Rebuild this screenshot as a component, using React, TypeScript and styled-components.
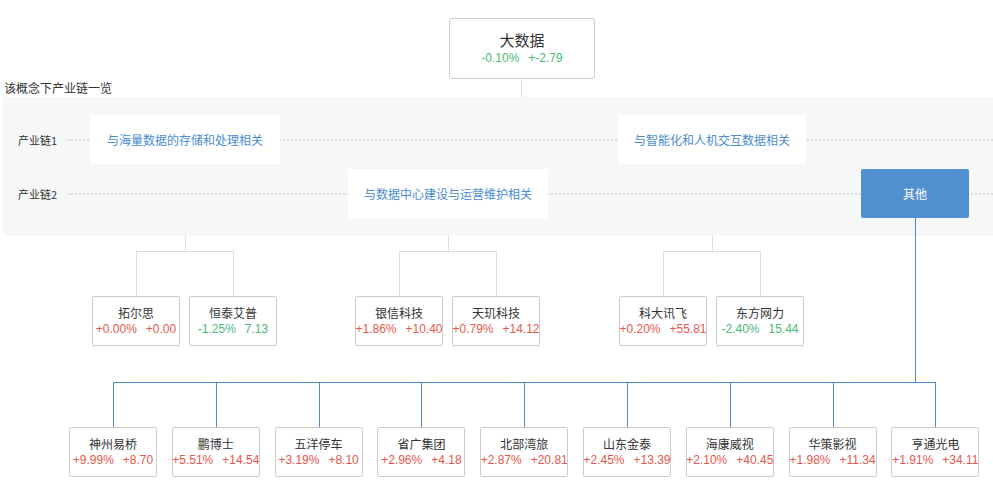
import styled, { createGlobalStyle } from "styled-components"

const Global = createGlobalStyle`
  body { margin: 0; background: #fff; font-family: "Noto Sans CJK SC", "Liberation Sans", sans-serif; }
`

type Stock = { name: string; pct: string; chg: string; up: boolean }

const groups: { x: number; stocks: Stock[] }[] = [
  { x: 92, stocks: [
    { name: "拓尔思", pct: "+0.00%", chg: "+0.00", up: true },
    { name: "恒泰艾普", pct: "-1.25%", chg: "7.13", up: false },
  ] },
  { x: 355, stocks: [
    { name: "银信科技", pct: "+1.86%", chg: "+10.40", up: true },
    { name: "天玑科技", pct: "+0.79%", chg: "+14.12", up: true },
  ] },
  { x: 619, stocks: [
    { name: "科大讯飞", pct: "+0.20%", chg: "+55.81", up: true },
    { name: "东方网力", pct: "-2.40%", chg: "15.44", up: false },
  ] },
]

const others: Stock[] = [
  { name: "神州易桥", pct: "+9.99%", chg: "+8.70", up: true },
  { name: "鹏博士", pct: "+5.51%", chg: "+14.54", up: true },
  { name: "五洋停车", pct: "+3.19%", chg: "+8.10", up: true },
  { name: "省广集团", pct: "+2.96%", chg: "+4.18", up: true },
  { name: "北部湾旅", pct: "+2.87%", chg: "+20.81", up: true },
  { name: "山东金泰", pct: "+2.45%", chg: "+13.39", up: true },
  { name: "海康威视", pct: "+2.10%", chg: "+40.45", up: true },
  { name: "华策影视", pct: "+1.98%", chg: "+11.34", up: true },
  { name: "亨通光电", pct: "+1.91%", chg: "+34.11", up: true },
]

export default function App() {
  return (
    <Canvas>
      <Global />
      <Root>
        <RootName>大数据</RootName>
        <Nums><Num $up={false}>-0.10%</Num><Num $up={false}>+-2.79</Num></Nums>
      </Root>
      <VLine $x={521} $y={78} $h={19} />
      <Title>该概念下产业链一览</Title>
      <Band>
        <ChainRow>
          <ChainLabel>产业链1</ChainLabel>
          <Dots />
          <Topic $x={90} $w={190}>与海量数据的存储和处理相关</Topic>
          <Topic $x={618} $w={188}>与智能化和人机交互数据相关</Topic>
        </ChainRow>
        <ChainRow>
          <ChainLabel>产业链2</ChainLabel>
          <Dots />
          <Topic $x={348} $w={200}>与数据中心建设与运营维护相关</Topic>
          <Topic $x={861} $w={108} $active>其他</Topic>
        </ChainRow>
      </Band>

      {groups.map((g, i) => (
        <div key={i}>
          <VLine $x={g.x + 93} $y={236} $h={15} />
          <HLine $x={g.x + 44} $y={251} $w={97} />
          <VLine $x={g.x + 44} $y={251} $h={45} />
          <VLine $x={g.x + 141} $y={251} $h={45} />
          {g.stocks.map((s, j) => (
            <Card key={j} style={{ left: g.x + j * 97, top: 296 }}>
              <CardName>{s.name}</CardName>
              <Nums><Num $up={s.up}>{s.pct}</Num><Num $up={s.up}>{s.chg}</Num></Nums>
            </Card>
          ))}
        </div>
      ))}

      <VLine $x={915} $y={218} $h={164} $blue />
      <HLine $x={113} $y={382} $w={823} $blue />
      {others.map((s, i) => (
        <div key={i}>
          <VLine $x={113 + i * 102.8} $y={382} $h={45} $blue />
          <Card style={{ left: 69 + i * 102.8, top: 427 }}>
            <CardName>{s.name}</CardName>
            <Nums><Num $up={s.up}>{s.pct}</Num><Num $up={s.up}>{s.chg}</Num></Nums>
          </Card>
        </div>
      ))}
    </Canvas>
  )
}

const Canvas = styled.div`
  position: relative;
  width: 993px;
  height: 504px;
  overflow: hidden;
`

const Root = styled.div`
  position: absolute;
  left: 449px;
  top: 18px;
  width: 144px;
  height: 59px;
  border: 1px solid #ccc;
  border-radius: 3px;
  background: #fff;
  display: flex;
  flex-direction: column;
  align-items: center;
  justify-content: center;
`

const RootName = styled.div`
  font-size: 15px;
  color: #333;
  line-height: 20px;
`

const Title = styled.div`
  position: absolute;
  left: 4px;
  top: 79px;
  font-size: 12px;
  color: #333;
`

const Band = styled.div`
  position: absolute;
  left: 3px;
  top: 97px;
  width: 990px;
  height: 139px;
  background: #f7f7f7;
  padding-top: 18px;
  box-sizing: border-box;
  display: flex;
  flex-direction: column;
  gap: 5px;
`

const ChainRow = styled.div`
  position: relative;
  height: 49px;
  display: flex;
  align-items: center;
`

const ChainLabel = styled.span`
  font-size: 11px;
  color: #333;
  margin-left: 15px;
  width: 50px;
`

const Dots = styled.div`
  flex: 1;
  border-top: 2px dotted #ddd;
`

const Topic = styled.div<{ $x: number; $w: number; $active?: boolean }>`
  position: absolute;
  left: ${p => p.$x - 3}px;
  width: ${p => p.$w}px;
  top: 0;
  height: 49px;
  border-radius: 2px;
  background: ${p => (p.$active ? "#5190d0" : "#fff")};
  color: ${p => (p.$active ? "#fff" : "#4a8bd0")};
  font-size: 12px;
  display: flex;
  align-items: center;
  justify-content: center;
`

const VLine = styled.div<{ $x: number; $y: number; $h: number; $blue?: boolean }>`
  position: absolute;
  left: ${p => p.$x}px;
  top: ${p => p.$y}px;
  height: ${p => p.$h}px;
  width: 1px;
  background: ${p => (p.$blue ? "#4a8bd0" : "#ddd")};
`

const HLine = styled.div<{ $x: number; $y: number; $w: number; $blue?: boolean }>`
  position: absolute;
  left: ${p => p.$x}px;
  top: ${p => p.$y}px;
  width: ${p => p.$w}px;
  height: 1px;
  background: ${p => (p.$blue ? "#4a8bd0" : "#ddd")};
`

const Card = styled.div`
  position: absolute;
  width: 86px;
  height: 48px;
  border: 1px solid #ccc;
  border-radius: 2px;
  background: #fff;
  display: flex;
  flex-direction: column;
  align-items: center;
  justify-content: center;
  white-space: nowrap;
`

const CardName = styled.div`
  font-size: 12px;
  color: #333;
  line-height: 17px;
`

const Nums = styled.div`
  display: flex;
  gap: 9px;
  font-family: "Liberation Sans", "Noto Sans CJK SC", sans-serif;
  font-size: 12px;
  line-height: 17px;
`

const Num = styled.span<{ $up: boolean }>`
  color: ${p => (p.$up ? "#e5574c" : "#4cb877")};
`
